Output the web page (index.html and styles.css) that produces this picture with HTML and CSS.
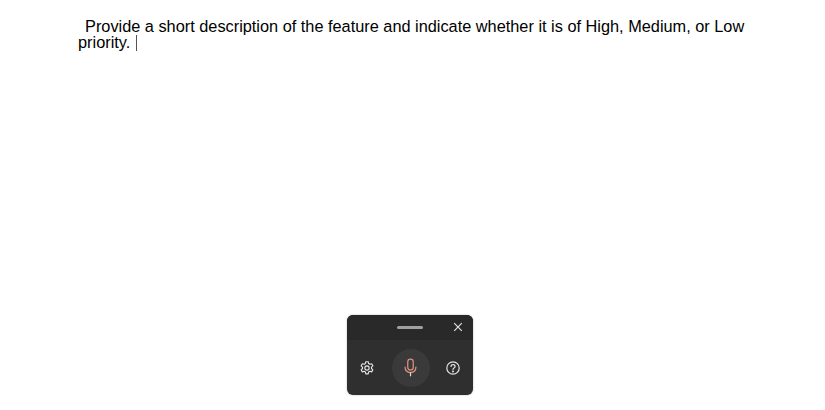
FILE: index.html
```html
<!DOCTYPE html>
<html lang="en">
<head>
  <meta charset="UTF-8">
  <title>Voice typing</title>
  <link rel="stylesheet" href="styles.css">
</head>
<body>

  <div class="doc">
    <p class="doc-text">Provide a short description of the feature and indicate whether it is of High, Medium, or Low priority. <span class="caret"></span></p>
  </div>

  <!-- Voice typing toolbar, floats over the document -->
  <div class="voice-bar">
    <div class="voice-head">
      <span class="grip"></span>
      <svg class="close-icon" width="10" height="10" viewBox="0 0 10 10">
        <path d="M1.2 1.2 L8.8 8.8 M8.8 1.2 L1.2 8.8" stroke="#e0e0e0" stroke-width="1.2" fill="none"/>
      </svg>
    </div>
    <div class="voice-body">
      <svg class="side-icon" width="16" height="16" viewBox="0 0 24 24" fill="none" stroke="#e4e4e4" stroke-width="1.7" stroke-linejoin="round">
        <circle cx="12" cy="12" r="3.2"/>
        <path d="M10.2 2.6 h3.6 l.6 2.8 l1.9 1.1 l2.7-.9 l1.8 3.1 l-2.1 1.9 v2.2 l2.1 1.9 l-1.8 3.1 l-2.7-.9 l-1.9 1.1 l-.6 2.8 h-3.6 l-.6-2.8 l-1.9-1.1 l-2.7.9 l-1.8-3.1 l2.1-1.9 v-2.2 l-2.1-1.9 l1.8-3.1 l2.7.9 l1.9-1.1 z"/>
      </svg>
      <div class="mic-btn">
        <svg width="15" height="19" viewBox="0 0 18 22" fill="none" stroke="#dd8f7e" stroke-width="1.5" stroke-linecap="round">
          <rect x="5.7" y="1" width="6.6" height="13" rx="3.3"/>
          <path d="M2.5 10.5 C2.5 14.5 5 17 9 17 C13 17 15.5 14.5 15.5 10.5"/>
          <path d="M9 17 V21" stroke="#e0d2cc"/>
        </svg>
      </div>
      <svg class="side-icon" width="16" height="16" viewBox="0 0 16 16" fill="none" stroke="#e4e4e4" stroke-width="1.2" stroke-linecap="round">
        <circle cx="8" cy="8" r="6.2"/>
        <path d="M6 6.5 C6 4 10.1 4 10.1 6.4 C10.1 7.9 8 7.9 8 9.6"/>
        <circle cx="8" cy="11.5" r="0.4" fill="#e4e4e4"/>
      </svg>
    </div>
  </div>

</body>
</html>
```

FILE: styles.css
```css
html, body {
  margin: 0;
  padding: 0;
  height: 100%;
  overflow: hidden;
  background-color: #ffffff;
}
.doc {
  padding: 18px 50px 0 78px;
}
.doc-text {
  margin: 0;
  font-family: "Liberation Sans", Arial, sans-serif;
  font-size: 16.32px;
  line-height: 16px;
  color: #000000;
  text-indent: 7px;
}
.caret {
  display: inline-block;
  width: 1px;
  height: 16px;
  margin-left: 1px;
  vertical-align: -3px;
  background-color: #555555;
}
.voice-bar {
  position: absolute;
  left: 347px;
  top: 315px;
  width: 126px;
  height: 80px;
  border-radius: 6px;
  overflow: hidden;
  background-color: #2f2f2f;
  box-shadow: 0 0 2px rgba(0, 0, 0, 0.3);
}
.voice-head {
  height: 25px;
  position: relative;
  background-color: #292929;
  display: flex;
  align-items: center;
  justify-content: center;
}
.grip {
  width: 26px;
  height: 3px;
  border-radius: 2px;
  background-color: #a0a0a0;
}
.close-icon {
  position: absolute;
  right: 10px;
  top: 7px;
}
.voice-body {
  height: 55px;
  display: flex;
  align-items: center;
  justify-content: space-between;
  padding: 0 12px;
}
.mic-btn {
  width: 38px;
  height: 38px;
  margin-left: 1px;
  border-radius: 50%;
  background-color: #3a3a3a;
  display: flex;
  align-items: center;
  justify-content: center;
}
```
